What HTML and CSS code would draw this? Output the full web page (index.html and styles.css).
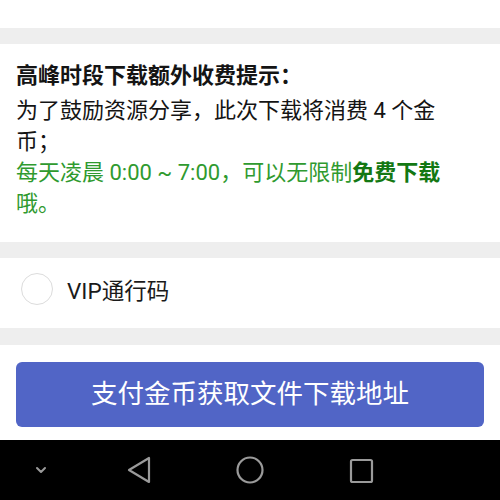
FILE: index.html
```html
<!DOCTYPE html>
<html lang="zh">
<head>
<meta charset="utf-8">
<link rel="stylesheet" href="styles.css">
</head>
<body>
<div class="page">
  <div class="top"></div>
  <div class="notice">
    <div class="title">高峰时段下载额外收费提示：</div>
    <div class="body">为了鼓励资源分享，此次下载将消费 4 个金币；</div>
    <div class="body green">每天凌晨 0:00 ~ 7:00，可以无限制<b>免费下载</b>哦。</div>
  </div>
  <div class="option">
    <span class="radio"></span>
    <span class="label">VIP通行码</span>
  </div>
  <div class="action">
    <div class="btn">支付金币获取文件下载地址</div>
  </div>
  <div class="nav">
    <svg class="navsvg" width="500" height="60" viewBox="0 0 500 60">
      <path d="M37 28 L41 32 L45 28" fill="none" stroke="#9a9a9a" stroke-width="2" stroke-linecap="round" stroke-linejoin="round"/>
      <path d="M149 18 L149 42 L129 30 Z" fill="none" stroke="#9a9a9a" stroke-width="2.2" stroke-linejoin="round"/>
      <circle cx="250" cy="30" r="12.5" fill="none" stroke="#9a9a9a" stroke-width="2.2"/>
      <rect x="351" y="20" width="21" height="22" rx="1.5" fill="none" stroke="#9a9a9a" stroke-width="2.2"/>
    </svg>
  </div>
</div>
</body>
</html>
```
FILE: styles.css
```css
html, body {
  margin: 0;
  padding: 0;
  background: #eeeeee;
}
.page {
  width: 500px;
  height: 500px;
  display: flex;
  flex-direction: column;
  font-family: Roboto, "Noto Sans CJK SC", sans-serif;
  color: #141414;
  overflow: hidden;
}
.top {
  height: 28px;
  background: #fff;
  margin-bottom: 16px;
}
.notice {
  background: #fff;
  height: 198px;
  box-sizing: border-box;
  padding: 16px 40px 0 16px;
  margin-bottom: 16px;
}
.title {
  font-size: 22px;
  font-weight: bold;
  line-height: 31px;
  margin-bottom: 4px;
}
.body {
  font-size: 22px;
  line-height: 31px;
}
.green {
  color: #2f9a2f;
}
.green b {
  color: #137813;
}
.option {
  background: #fff;
  height: 70px;
  box-sizing: border-box;
  display: flex;
  align-items: center;
  padding: 0 0 9px 21px;
  margin-bottom: 17px;
}
.radio {
  width: 30px;
  height: 30px;
  border: 1.5px solid #dcdcdc;
  border-radius: 50%;
  margin-right: 14px;
}
.label {
  font-size: 22.5px;
  color: #1a1a1a;
}
.action {
  background: #fff;
  height: 95px;
  box-sizing: border-box;
  padding: 17px 16px 0 16px;
}
.btn {
  height: 65px;
  box-sizing: border-box;
  padding-bottom: 6px;
  background: #5165c6;
  border-radius: 6px;
  color: #fff;
  font-size: 26.5px;
  display: flex;
  align-items: center;
  justify-content: center;
}
.nav {
  height: 60px;
  background: #000;
}
.navsvg {
  display: block;
}
```
